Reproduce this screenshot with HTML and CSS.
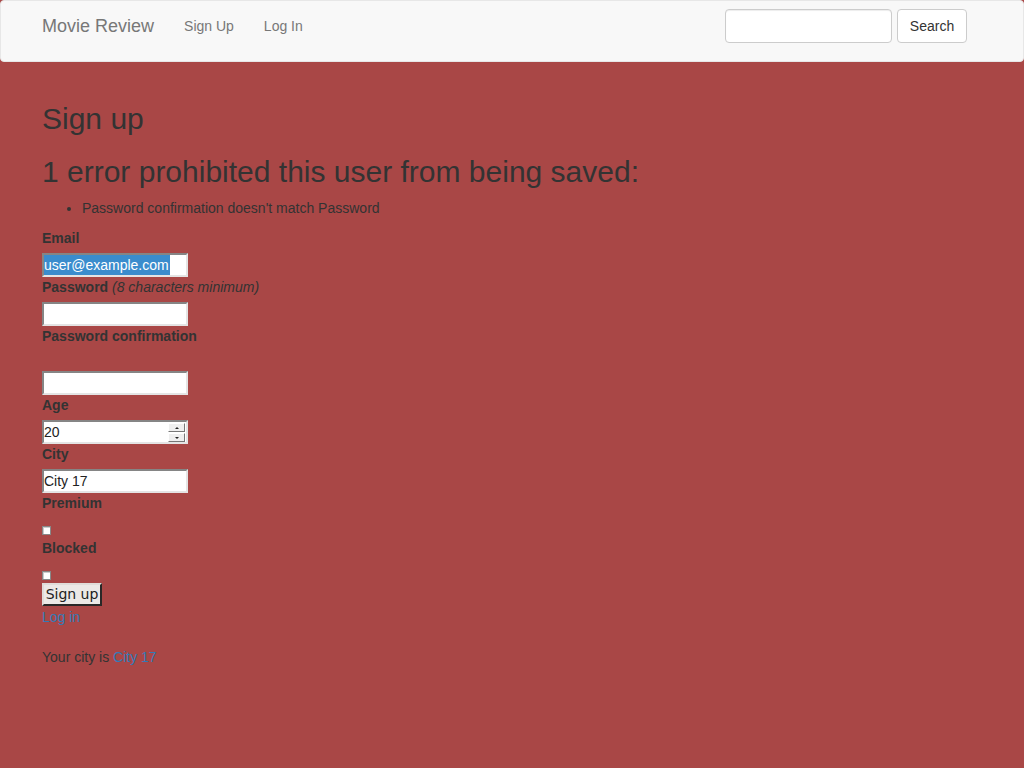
FILE: index.html
```html
<!DOCTYPE html>
<html>
<head>
<meta charset="utf-8">
<title>Movie Review</title>
<link rel="stylesheet" href="styles.css">
</head>
<body>
<nav class="navbar">
  <div class="nav-inner">
    <a class="brand" href="#">Movie Review</a>
    <a class="nav-link" href="#">Sign Up</a>
    <a class="nav-link" href="#">Log In</a>
    <form class="nav-form">
      <input class="search-input" type="text">
      <button class="search-btn" type="button">Search</button>
    </form>
  </div>
</nav>
<main class="container">
  <h2 class="title">Sign up</h2>
  <h2 class="error-title">1 error prohibited this user from being saved:</h2>
  <ul class="errors">
    <li>Password confirmation doesn't match Password</li>
  </ul>

  <div class="field">
    <label>Email</label>
    <div class="faux-input"><span class="selected">user@example.com</span></div>
  </div>
  <div class="field">
    <label>Password <em class="hint">(8 characters minimum)</em></label>
    <div class="faux-input"></div>
  </div>
  <div class="field">
    <label>Password confirmation</label>
    <div class="spacer"></div>
    <div class="faux-input"></div>
  </div>
  <div class="field">
    <label>Age</label>
    <div class="faux-input number">
      <span class="value">20</span>
      <span class="spinner">
        <span class="spin up"><span class="tri-up"></span></span>
        <span class="spin down"><span class="tri-down"></span></span>
      </span>
    </div>
  </div>
  <div class="field">
    <label>City</label>
    <div class="faux-input"><span class="value">City 17</span></div>
  </div>
  <div class="field">
    <label>Premium</label>
    <div class="check-row"><span class="checkbox"></span></div>
  </div>
  <div class="field">
    <label>Blocked</label>
    <div class="check-row"><span class="checkbox"></span></div>
  </div>
  <div class="actions">
    <button class="submit" type="button">Sign up</button>
  </div>
  <a class="login-link" href="#">Log in</a>
  <p class="city">Your city is <a href="#">City 17</a></p>
</main>
</body>
</html>
```
FILE: styles.css
```css
* { box-sizing: border-box; }
html, body { margin: 0; }
body {
  background: #a94746;
  color: #333;
  font-family: "Liberation Sans", Arial, sans-serif;
  font-size: 14px;
  line-height: 20px;
  min-height: 768px;
}
a { color: #337ab7; text-decoration: none; }

.navbar {
  height: 62px;
  background: #f8f8f8;
  border: 1px solid #e7e7e7;
  border-radius: 4px;
}
.nav-inner {
  width: 970px;
  margin: 0 auto;
  padding: 0 15px;
  display: flex;
  align-items: flex-start;
}
.brand {
  color: #777;
  font-size: 18px;
  line-height: 20px;
  padding: 15px 15px 15px 0;
}
.nav-link {
  color: #777;
  padding: 15px;
  line-height: 20px;
}
.nav-form {
  margin-left: auto;
  margin-top: 8px;
  padding-right: 15px;
  display: flex;
  gap: 5px;
}
.search-input {
  width: 167px;
  height: 34px;
  border: 1px solid #ccc;
  border-radius: 4px;
  background: #fff;
  box-shadow: inset 0 1px 1px rgba(0,0,0,.075);
  margin: 0;
}
.search-btn {
  width: 70px;
  height: 34px;
  border: 1px solid #ccc;
  border-radius: 4px;
  background: #fff;
  color: #333;
  font-family: "Liberation Sans", Arial, sans-serif;
  font-size: 14px;
  padding: 0;
  margin: 0;
}

.container {
  width: 970px;
  margin: 0 auto;
  padding: 20px 15px 0;
}
.title, .error-title {
  font-size: 30px;
  line-height: 33px;
  font-weight: 400;
  margin: 20px 0 10px;
}
.title { margin-bottom: 0; }
.errors {
  margin: 0 0 10px;
  padding-left: 40px;
}

.field label {
  display: block;
  font-weight: 700;
  line-height: 20px;
  margin-bottom: 5px;
}
.hint { font-weight: 400; }
.spacer { height: 20px; }

.faux-input {
  position: relative;
  width: 146px;
  height: 24px;
  background: #fff;
  border-top: 2px solid #858585;
  border-left: 2px solid #858585;
  border-bottom: 2px solid #e4e4e4;
  border-right: 2px solid #e4e4e4;
  line-height: 20px;
  font-size: 14px;
  color: #222;
  white-space: nowrap;
}
.selected {
  display: inline-block;
  background: #3a8ccd;
  color: #fff;
  padding: 0 1px 0 0;
}

.spinner {
  position: absolute;
  right: 1px;
  top: 1px;
  width: 17px;
  display: flex;
  flex-direction: column;
  gap: 1px;
}
.spin {
  height: 9px;
  background: #efefef;
  border-top: 1px solid #fff;
  border-left: 1px solid #fff;
  border-right: 1px solid #777;
  border-bottom: 1px solid #777;
  display: flex;
  align-items: center;
  justify-content: center;
}
.tri-up {
  width: 0; height: 0;
  border-left: 2px solid transparent;
  border-right: 2px solid transparent;
  border-bottom: 2px solid #222;
}
.tri-down {
  width: 0; height: 0;
  border-left: 2px solid transparent;
  border-right: 2px solid transparent;
  border-top: 2px solid #222;
}

.check-row {
  height: 20px;
  padding-top: 8px;
}
.checkbox {
  display: block;
  width: 9px;
  height: 9px;
  background: #fff;
  border: 1px solid #888;
  box-shadow: inset 1px 1px 0 #ccc;
}

.actions { height: 24px; }
.submit {
  display: block;
  width: 60px;
  height: 23px;
  margin: 0;
  padding: 0;
  background: #ece9e6;
  border: 2px outset #e0ddd9;
  border-right-color: #7d7b78;
  border-bottom-color: #7d7b78;
  color: #222;
  font-family: "DejaVu Sans", sans-serif;
  font-size: 14px;
  line-height: 19px;
}
.login-link {
  display: block;
  line-height: 20px;
}
.city {
  margin: 20px 0 10px;
}
```
